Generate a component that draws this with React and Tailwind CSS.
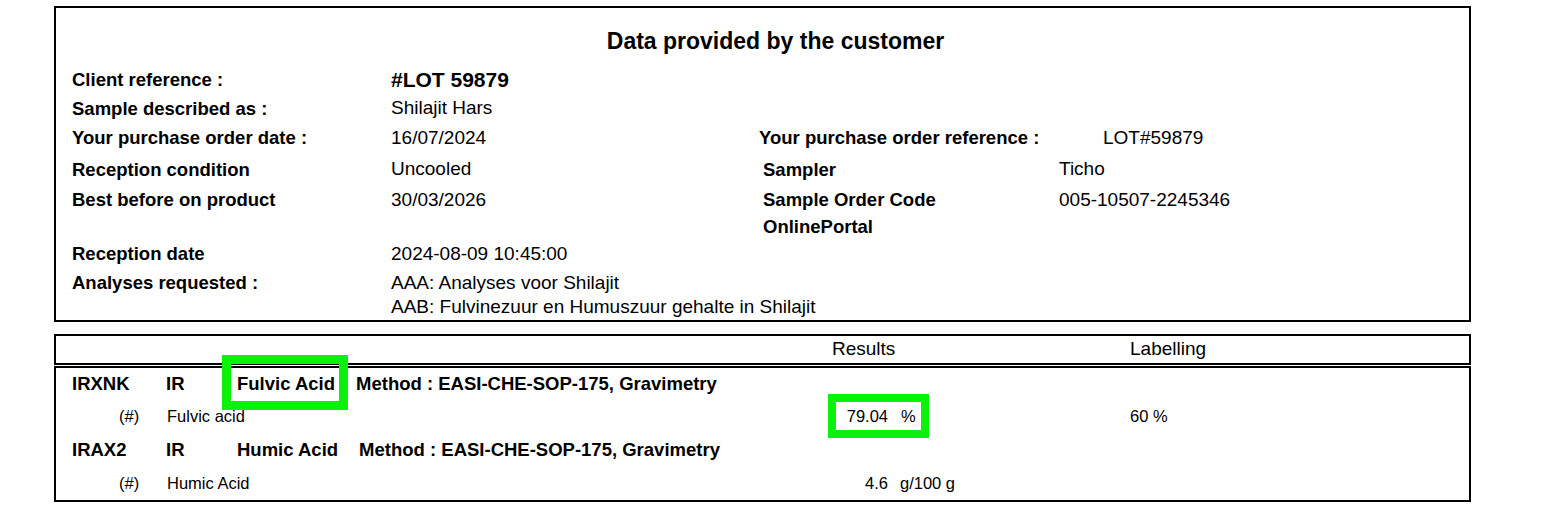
import React from "react";

const info = [
  { label: "Client reference :", value: "#LOT 59879", big: true, h: "h-[30px]" },
  { label: "Sample described as :", value: "Shilajit Hars", h: "h-[29px]" },
];

export default function App() {
  return (
    <div className="w-[1543px] h-[510px] bg-white pt-[6px] text-black font-['Liberation_Sans',Arial,sans-serif]">
      {/* customer data block */}
      <div className="ml-[54px] w-[1417px] border-2 border-black pb-[1px]">
        <h2 className="pt-[18px] pl-[26px] text-center text-[23px] font-bold leading-[30px]">
          Data provided by the customer
        </h2>

        <div className="mt-[8px] pl-[16px]">
          {info.map((r) => (
            <div key={r.label} className={`grid grid-cols-[319px_368px_300px_1fr] items-center ${r.h}`}>
              <span className="text-[18.5px] font-bold">{r.label}</span>
              <span className={r.big ? "text-[21px] font-bold" : "text-[19px]"}>{r.value}</span>
            </div>
          ))}

          <div className="grid h-[30px] grid-cols-[319px_368px_300px_1fr] items-center">
            <span className="text-[18.5px] font-bold">Your purchase order date :</span>
            <span className="text-[19px]">16/07/2024</span>
            <span className="text-[18.5px] font-bold">Your purchase order reference :</span>
            <span className="ml-[44px] text-[19px]">LOT#59879</span>
          </div>

          <div className="grid h-[33px] grid-cols-[319px_368px_300px_1fr] items-center">
            <span className="text-[18.5px] font-bold">Reception condition</span>
            <span className="text-[19px]">Uncooled</span>
            <span className="pl-[4px] text-[18.5px] font-bold">Sampler</span>
            <span className="text-[19px]">Ticho</span>
          </div>

          <div className="grid grid-cols-[319px_368px_300px_1fr] items-start leading-[27px]">
            <span className="text-[18.5px] font-bold">Best before on product</span>
            <span className="text-[19px]">30/03/2026</span>
            <span className="pl-[4px] text-[18.5px] font-bold">
              Sample Order Code
              <br />
              OnlinePortal
            </span>
            <span className="text-[19px]">005-10507-2245346</span>
          </div>

          <div className="grid h-[27px] grid-cols-[319px_368px_300px_1fr] items-center">
            <span className="text-[18.5px] font-bold">Reception date</span>
            <span className="text-[19px]">2024-08-09 10:45:00</span>
          </div>

          <div className="grid grid-cols-[319px_1fr] items-start pt-[4px] leading-[24px]">
            <span className="text-[18.5px] font-bold">Analyses requested :</span>
            <div className="text-[19px]">
              <div>AAA: Analyses voor Shilajit</div>
              <div>AAB: Fulvinezuur en Humuszuur gehalte in Shilajit</div>
            </div>
          </div>
        </div>
      </div>

      {/* results block */}
      <div className="relative ml-[54px] mt-[12px] w-[1417px]">
        <div className="flex h-[31px] items-center border-2 border-black text-[19px]">
          <div className="w-[776px]" />
          <div className="w-[298px]">Results</div>
          <div>Labelling</div>
        </div>

        <div className="mt-[1px] border-2 border-black">
          <div className="flex h-[31px] items-center pl-[16px] text-[18.5px] font-bold">
            <span className="w-[94px]">IRXNK</span>
            <span className="w-[71px]">IR</span>
            <span>Fulvic Acid</span>
            <span className="ml-[21px]">Method : EASI-CHE-SOP-175, Gravimetry</span>
          </div>
          <div className="flex h-[34px] items-center text-[16.5px]">
            <span className="w-[111px] pl-[63px]">(#)</span>
            <span className="w-[621px]">Fulvic acid</span>
            <span className="w-[100px] text-right">79.04</span>
            <span className="w-[242px] pl-[13px]">%</span>
            <span>60 %</span>
          </div>
          <div className="flex h-[34px] items-center pl-[16px] text-[18.5px] font-bold">
            <span className="w-[94px]">IRAX2</span>
            <span className="w-[71px]">IR</span>
            <span>Humic Acid</span>
            <span className="ml-[21px]">Method : EASI-CHE-SOP-175, Gravimetry</span>
          </div>
          <div className="flex h-[33px] items-center text-[16.5px]">
            <span className="w-[111px] pl-[63px]">(#)</span>
            <span className="w-[621px]">Humic Acid</span>
            <span className="w-[100px] text-right">4.6</span>
            <span className="w-[242px] pl-[12px]">g/100 g</span>
          </div>
        </div>

        {/* highlight annotations */}
        <div className="absolute left-[168px] top-[21px] h-[55px] w-[126px] border-[9px] border-[#0af20a]" />
        <div className="absolute left-[774px] top-[60px] h-[44px] w-[101px] border-[8px] border-[#0af20a]" />
      </div>
    </div>
  );
}
